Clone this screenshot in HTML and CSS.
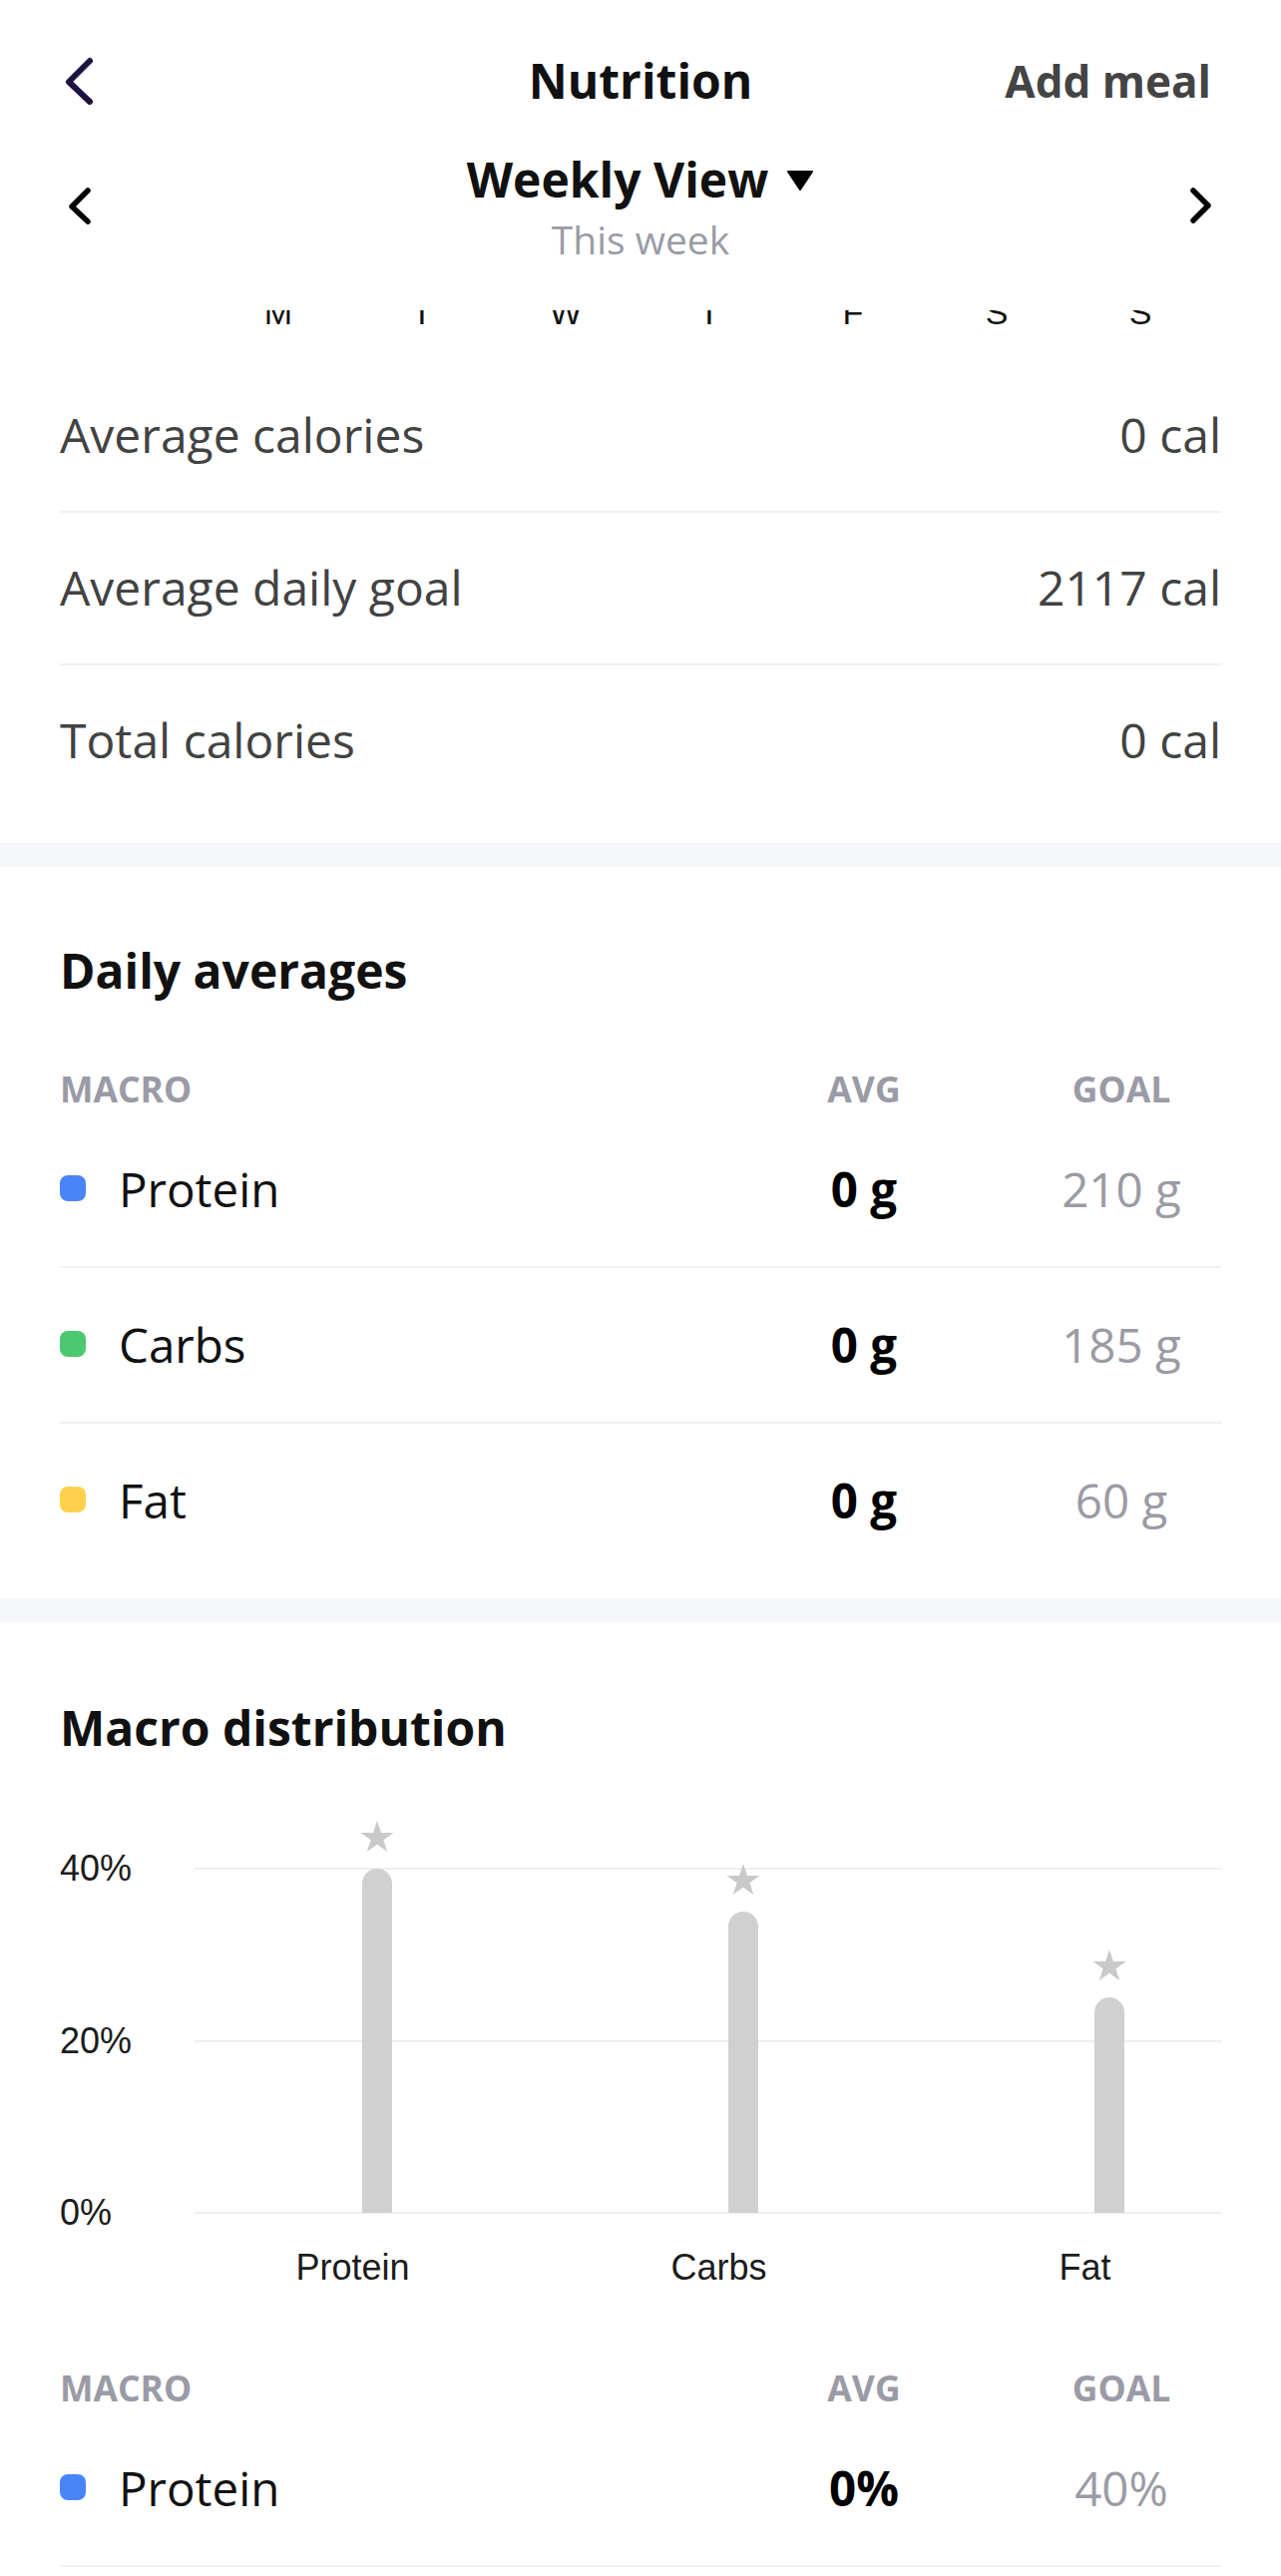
FILE: index.html
```html
<!DOCTYPE html>
<html lang="en">
<head>
<meta charset="utf-8">
<title>Nutrition</title>
<link rel="stylesheet" href="styles.css">
</head>
<body>
<header class="topbar">
  <div class="bar-row">
    <button class="icon-btn back" aria-label="Back">
      <svg width="33" height="53" viewBox="0 0 33 53"><path d="M27 6 L6 27 L27 47" fill="none" stroke="#1f1140" stroke-width="6" stroke-linecap="round" stroke-linejoin="round"/></svg>
    </button>
    <h1 class="title">Nutrition</h1>
    <button class="text-btn">Add meal</button>
  </div>
  <div class="range-row">
    <svg class="nav-chev" width="28" height="43" viewBox="0 0 28 43"><path d="M22 6 L6 22 L22 37" fill="none" stroke="#000" stroke-width="5.5" stroke-linecap="round" stroke-linejoin="round"/></svg>
    <div class="range">
      <div class="range-title">Weekly View <svg width="28" height="20" viewBox="0 0 28 20"><path d="M2 1 H26 L14 19 Z" fill="#000" stroke="#000" stroke-width="2" stroke-linejoin="round"/></svg></div>
      <div class="range-sub">This week</div>
    </div>
    <svg class="nav-chev" width="28" height="43" viewBox="0 0 28 43"><path d="M6 6 L21 21 L6 36" fill="none" stroke="#000" stroke-width="5.5" stroke-linecap="round" stroke-linejoin="round"/></svg>
  </div>
</header>

<div class="days">
  <span>M</span><span>T</span><span>W</span><span>T</span><span>F</span><span>S</span><span>S</span>
</div>

<section class="stats">
  <div class="stat-row"><span>Average calories</span><span>0 cal</span></div>
  <div class="stat-row"><span>Average daily goal</span><span>2117 cal</span></div>
  <div class="stat-row last"><span>Total calories</span><span>0 cal</span></div>
</section>

<div class="band"></div>

<section class="card daily">
  <h2 class="card-title">Daily averages</h2>
  <div class="macro-table">
    <div class="mt-head"><span>MACRO</span><span class="c">AVG</span><span class="c">GOAL</span></div>
    <div class="mt-row"><span class="name"><i class="dot protein"></i>Protein</span><span class="avg">0 g</span><span class="goal">210 g</span></div>
    <div class="mt-row"><span class="name"><i class="dot carbs"></i>Carbs</span><span class="avg">0 g</span><span class="goal">185 g</span></div>
    <div class="mt-row last"><span class="name"><i class="dot fat"></i>Fat</span><span class="avg">0 g</span><span class="goal">60 g</span></div>
  </div>
</section>

<div class="band"></div>

<section class="card dist">
  <h2 class="card-title">Macro distribution</h2>
  <div class="plot">
    <div class="gline g40"><span class="ylab">40%</span></div>
    <div class="gline g20"><span class="ylab">20%</span></div>
    <div class="gline g0"><span class="ylab">0%</span></div>
    <div class="bars">
      <div class="col">
        <svg class="star" width="34" height="32" viewBox="0 0 100 95"><polygon points="50,0 61.8,35.3 99,35.3 69,57.1 80.3,92.4 50,70.6 19.7,92.4 31,57.1 1,35.3 38.2,35.3" fill="#c9c9c9"/></svg>
        <div class="bar" style="height:345px"></div>
      </div>
      <div class="col">
        <svg class="star" width="34" height="32" viewBox="0 0 100 95"><polygon points="50,0 61.8,35.3 99,35.3 69,57.1 80.3,92.4 50,70.6 19.7,92.4 31,57.1 1,35.3 38.2,35.3" fill="#c9c9c9"/></svg>
        <div class="bar" style="height:302px"></div>
      </div>
      <div class="col">
        <svg class="star" width="34" height="32" viewBox="0 0 100 95"><polygon points="50,0 61.8,35.3 99,35.3 69,57.1 80.3,92.4 50,70.6 19.7,92.4 31,57.1 1,35.3 38.2,35.3" fill="#c9c9c9"/></svg>
        <div class="bar" style="height:216px"></div>
      </div>
    </div>
  </div>
  <div class="xlabels"><span>Protein</span><span>Carbs</span><span>Fat</span></div>

  <div class="macro-table second">
    <div class="mt-head"><span>MACRO</span><span class="c">AVG</span><span class="c">GOAL</span></div>
    <div class="mt-row"><span class="name"><i class="dot protein"></i>Protein</span><span class="avg">0%</span><span class="goal">40%</span></div>
    <div class="mt-row"><span class="name"><i class="dot carbs"></i>Carbs</span><span class="avg">0%</span><span class="goal">35%</span></div>
    <div class="mt-row last"><span class="name"><i class="dot fat"></i>Fat</span><span class="avg">0%</span><span class="goal">25%</span></div>
  </div>
</section>
</body>
</html>
```

FILE: styles.css
```css
* { box-sizing: border-box; }
html, body { margin: 0; padding: 0; }
body {
  width: 1284px;
  background: #fff;
  font-family: "Open Sans", "Noto Sans", sans-serif;
  color: #111;
}

/* header */
.topbar { background: #fff; }
.bar-row {
  display: grid;
  grid-template-columns: 1fr auto 1fr;
  align-items: center;
  height: 113px;
  padding: 49px 63px 0 63px;
}
.icon-btn {
  border: 0; background: none; padding: 0; margin: 0;
  display: flex; align-items: center; justify-self: start;
}
.icon-btn svg { display: block; }
.title {
  margin: 0;
  font-size: 48px;
  font-weight: 700;
  line-height: 64px;
  color: #111;
}
.text-btn {
  justify-self: end;
  border: 0; background: none; padding: 0;
  margin-right: 7px;
  font-family: inherit;
  font-size: 44px;
  font-weight: 700;
  line-height: 64px;
  color: #444;
}
.range-row {
  display: flex;
  justify-content: space-between;
  align-items: center;
  padding: 35px 66px 46px 66px;
}
.nav-chev { display: block; }
.range { text-align: center; }
.range-title {
  display: flex;
  align-items: center;
  justify-content: center;
  gap: 18px;
  font-size: 48px;
  font-weight: 700;
  line-height: 64px;
  color: #111;
}
.range-title svg { display: block; margin-top: 2px; }
.range-sub {
  margin-top: 3px;
  font-size: 39px;
  line-height: 50px;
  color: #9a9ba6;
}

/* clipped day strip */
.days {
  height: 14px;
  overflow: hidden;
  display: grid;
  grid-template-columns: repeat(7, 144px);
  margin-left: 207px;
}
.days span {
  font-family: "Liberation Sans", Arial, sans-serif;
  font-size: 34px;
  line-height: 34px;
  text-align: center;
  color: #111;
  margin-top: -15px;
}

/* stats */
.stats { padding: 36px 60px 27px 60px; }
.stat-row {
  display: flex;
  justify-content: space-between;
  padding: 45px 0 46px 0;
  font-size: 48px;
  line-height: 60px;
  color: #424242;
  border-bottom: 2px solid #f0f0f0;
}
.stat-row.last { border-bottom: 0; }

.band { height: 24px; background: #f6f7fa; }

/* cards */
.card { padding: 0 60px; }
.daily { padding-top: 74px; padding-bottom: 21px; }
.dist { padding-top: 76px; padding-bottom: 0; }
.card-title {
  margin: 0;
  font-size: 48px;
  font-weight: 700;
  line-height: 60px;
  color: #111;
}

.macro-table { margin-top: 64px; }
.macro-table.second { margin-top: 76px; }
.mt-head, .mt-row {
  display: grid;
  grid-template-columns: 1fr 170px 200px;
  column-gap: 73px;
  align-items: center;
}
.mt-head {
  font-size: 35.5px;
  font-weight: 700;
  line-height: 48px;
  color: #9a9ba6;
}
.c { text-align: center; }
.mt-row {
  padding: 46px 0;
  font-size: 47.5px;
  line-height: 62px;
  border-bottom: 2px solid #f0f0f0;
}
.mt-row.last { border-bottom: 0; }
.name { display: flex; align-items: center; color: #111; }
.dot {
  display: inline-block;
  width: 26px; height: 26px;
  border-radius: 8px;
  margin-right: 33px;
  margin-top: -3px;
}
.dot.protein { background: #4a85f8; }
.dot.carbs { background: #4cc86e; }
.dot.fat { background: #fdd14b; }
.avg { text-align: center; font-weight: 700; color: #000; }
.goal { text-align: center; color: #9b9ba5; }

/* chart */
.plot {
  position: relative;
  height: 345px;
  margin-top: 111px;
}
.gline {
  position: absolute;
  left: 135px;
  right: 0;
  height: 2px;
  margin-top: -1px;
  background: #efefef;
}
.g40 { top: 0; }
.g20 { top: 50%; }
.g0 { top: 100%; }
.ylab {
  position: absolute;
  left: -135px;
  top: 50%;
  transform: translateY(-50%);
  font-family: "Liberation Sans", Arial, sans-serif;
  font-size: 36px;
  line-height: 40px;
  color: #1c1c1c;
}
.bars {
  position: absolute;
  left: 110px;
  width: 1101px;
  bottom: 0;
  height: 440px;
  display: flex;
}
.col {
  flex: 1;
  display: flex;
  flex-direction: column;
  justify-content: flex-end;
  align-items: center;
  gap: 16px;
  padding-left: 48px;
}
.star { display: block; }
.bar {
  width: 30px;
  background: #d0d0d0;
  border-radius: 15px 15px 0 0;
}
.xlabels {
  display: flex;
  margin-left: 110px;
  width: 1101px;
  margin-top: 35px;
}
.xlabels span {
  flex: 1;
  text-align: center;
  font-family: "Liberation Sans", Arial, sans-serif;
  font-size: 36px;
  line-height: 40px;
  color: #1c1c1c;
}
```
